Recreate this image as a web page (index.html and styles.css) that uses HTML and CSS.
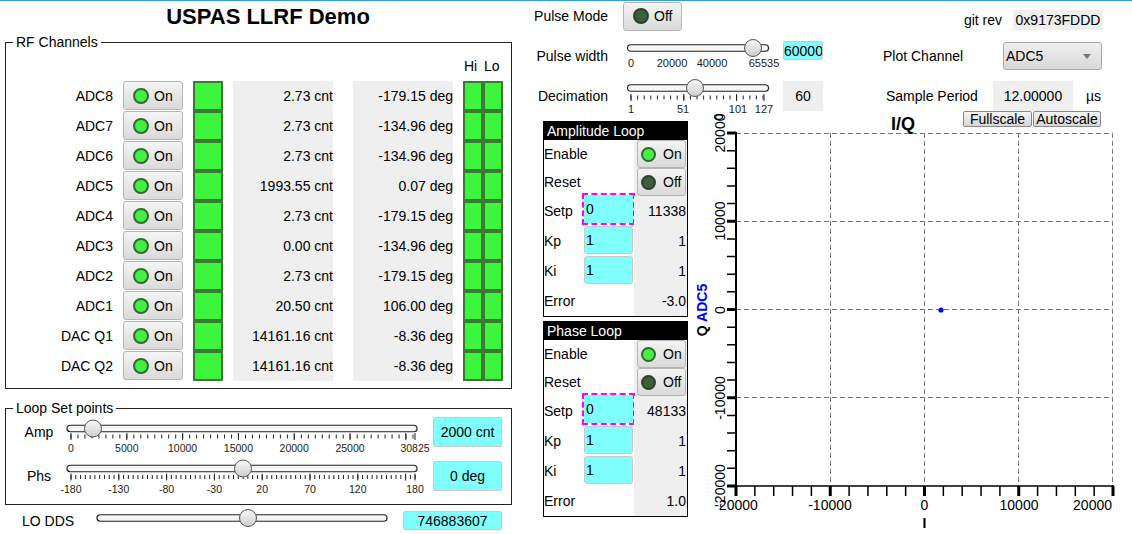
FILE: index.html
```html
<!DOCTYPE html>
<html>
<head>
<meta charset="utf-8">
<title>USPAS LLRF Demo</title>
<link rel="stylesheet" href="styles.css">
</head>
<body>
<div class="page">
  <div class="left">
    <h1 class="title">USPAS LLRF Demo</h1>
    <fieldset class="group rf">
      <legend>RF Channels</legend>
      <div class="rf-head"><span>Hi</span><span>Lo</span></div>
      <div class="rf-row"><span class="ch">ADC8</span><button class="btn rfbtn"><i class="led"></i>On</button><span class="lamp"></span><span class="val v1">2.73 cnt</span><span class="val v2">-179.15 deg</span><span class="hilo"><i></i><i></i></span></div>
      <div class="rf-row"><span class="ch">ADC7</span><button class="btn rfbtn"><i class="led"></i>On</button><span class="lamp"></span><span class="val v1">2.73 cnt</span><span class="val v2">-134.96 deg</span><span class="hilo"><i></i><i></i></span></div>
      <div class="rf-row"><span class="ch">ADC6</span><button class="btn rfbtn"><i class="led"></i>On</button><span class="lamp"></span><span class="val v1">2.73 cnt</span><span class="val v2">-134.96 deg</span><span class="hilo"><i></i><i></i></span></div>
      <div class="rf-row"><span class="ch">ADC5</span><button class="btn rfbtn"><i class="led"></i>On</button><span class="lamp"></span><span class="val v1">1993.55 cnt</span><span class="val v2">0.07 deg</span><span class="hilo"><i></i><i></i></span></div>
      <div class="rf-row"><span class="ch">ADC4</span><button class="btn rfbtn"><i class="led"></i>On</button><span class="lamp"></span><span class="val v1">2.73 cnt</span><span class="val v2">-179.15 deg</span><span class="hilo"><i></i><i></i></span></div>
      <div class="rf-row"><span class="ch">ADC3</span><button class="btn rfbtn"><i class="led"></i>On</button><span class="lamp"></span><span class="val v1">0.00 cnt</span><span class="val v2">-134.96 deg</span><span class="hilo"><i></i><i></i></span></div>
      <div class="rf-row"><span class="ch">ADC2</span><button class="btn rfbtn"><i class="led"></i>On</button><span class="lamp"></span><span class="val v1">2.73 cnt</span><span class="val v2">-179.15 deg</span><span class="hilo"><i></i><i></i></span></div>
      <div class="rf-row"><span class="ch">ADC1</span><button class="btn rfbtn"><i class="led"></i>On</button><span class="lamp"></span><span class="val v1">20.50 cnt</span><span class="val v2">106.00 deg</span><span class="hilo"><i></i><i></i></span></div>
      <div class="rf-row"><span class="ch">DAC Q1</span><button class="btn rfbtn"><i class="led"></i>On</button><span class="lamp"></span><span class="val v1">14161.16 cnt</span><span class="val v2">-8.36 deg</span><span class="hilo"><i></i><i></i></span></div>
      <div class="rf-row"><span class="ch">DAC Q2</span><button class="btn rfbtn"><i class="led"></i>On</button><span class="lamp"></span><span class="val v1">14161.16 cnt</span><span class="val v2">-8.36 deg</span><span class="hilo"><i></i><i></i></span></div>
    </fieldset>

    <fieldset class="group setp">
      <legend>Loop Set points</legend>
      <div class="sp-row">
        <span class="sp-label">Amp</span>
        <svg class="slider sp-amp" width="366" height="30" viewBox="0 0 366 30">
          <defs><linearGradient id="tgA" x1="0" y1="0" x2="0" y2="1"><stop offset="0" stop-color="#fafafa"/><stop offset="1" stop-color="#cdcdcd"/></linearGradient></defs>
          <rect class="trk" x="5" y="5.25" width="350" height="6.5" rx="3.25"/>
          <line class="tick" x1="8.5" y1="16.5" x2="354" y2="16.5" stroke-width="4" stroke-dasharray="1 5.98"/>
          <line class="tick" x1="8.5" y1="16.5" x2="354" y2="16.5" stroke-width="7" stroke-dasharray="1 54.8"/>
          <line class="tick" x1="353" y1="13" x2="353" y2="20" stroke-width="1"/>
          <circle cx="31" cy="8.5" r="8.5" fill="url(#tgA)" class="thumb"/>
          <g class="scale">
            <text x="9" y="32">0</text><text x="64.8" y="32">5000</text><text x="120.6" y="32">10000</text><text x="176.4" y="32">15000</text><text x="232.2" y="32">20000</text><text x="288" y="32">25000</text><text x="353" y="32">30825</text>
          </g>
        </svg>
        <span class="vbox cyan spbox">2000 cnt</span>
      </div>
      <div class="sp-row sp-gap">
        <span class="sp-label">Phs</span>
        <svg class="slider sp-phs" width="366" height="30" viewBox="0 0 366 30">
          <defs><linearGradient id="tgP" x1="0" y1="0" x2="0" y2="1"><stop offset="0" stop-color="#fafafa"/><stop offset="1" stop-color="#cdcdcd"/></linearGradient></defs>
          <rect class="trk" x="5" y="5.25" width="350" height="6.5" rx="3.25"/>
          <line class="tick" x1="8.5" y1="17" x2="354" y2="17" stroke-width="4" stroke-dasharray="1 3.78"/>
          <line class="tick" x1="8.5" y1="17" x2="354" y2="17" stroke-width="7" stroke-dasharray="1 46.8"/>
          <line class="tick" x1="353" y1="13.5" x2="353" y2="20.5" stroke-width="1"/>
          <circle cx="181" cy="8.5" r="8.5" fill="url(#tgP)" class="thumb"/>
          <g class="scale">
            <text x="9" y="33">-180</text><text x="56.8" y="33">-130</text><text x="104.6" y="33">-80</text><text x="152.4" y="33">-30</text><text x="200.2" y="33">20</text><text x="248" y="33">70</text><text x="295.8" y="33">120</text><text x="353" y="33">180</text>
          </g>
        </svg>
        <span class="vbox cyan spbox">0 deg</span>
      </div>
    </fieldset>

    <div class="lo-row">
      <span class="lo-label">LO DDS</span>
      <svg class="slider lo-slider" width="300" height="19" viewBox="0 0 300 19">
        <defs><linearGradient id="tgL" x1="0" y1="0" x2="0" y2="1"><stop offset="0" stop-color="#fafafa"/><stop offset="1" stop-color="#cdcdcd"/></linearGradient></defs>
        <rect class="trk" x="5" y="3.75" width="290" height="6.5" rx="3.25"/>
        <circle cx="156" cy="7" r="8.5" fill="url(#tgL)" class="thumb"/>
      </svg>
      <span class="vbox cyan lobox">746883607</span>
    </div>
  </div>

  <div class="right">
    <div class="crow">
      <span class="clabel">Pulse Mode</span>
      <button class="btn pmbtn"><i class="led off"></i>Off</button>
      <div class="gitrev"><span>git rev</span><span class="gbox gitbox">0x9173FDDD</span></div>
    </div>
    <div class="crow">
      <span class="clabel">Pulse width</span>
      <svg class="slider small" width="150" height="32" viewBox="0 0 150 32">
        <defs><linearGradient id="tgW" x1="0" y1="0" x2="0" y2="1"><stop offset="0" stop-color="#fafafa"/><stop offset="1" stop-color="#cdcdcd"/></linearGradient></defs>
        <rect class="trk" x="4.5" y="4.75" width="141" height="6.5" rx="3.25"/>
        <circle cx="130" cy="8" r="8.5" fill="url(#tgW)" class="thumb"/>
        <g class="scale">
          <text x="8" y="27">0</text><text x="49" y="27">20000</text><text x="89" y="27">40000</text><text x="141" y="27">65535</text>
        </g>
      </svg>
      <span class="vbox cyan pwbox">60000</span>
      <span class="plabel">Plot Channel</span>
      <div class="select"><span>ADC5</span><i class="caret"></i></div>
    </div>
    <div class="crow">
      <span class="clabel">Decimation</span>
      <svg class="slider small" width="150" height="32" viewBox="0 0 150 32">
        <defs><linearGradient id="tgD" x1="0" y1="0" x2="0" y2="1"><stop offset="0" stop-color="#fafafa"/><stop offset="1" stop-color="#cdcdcd"/></linearGradient></defs>
        <rect class="trk" x="4.5" y="4.75" width="141" height="6.5" rx="3.25"/>
        <line class="tick" x1="7.5" y1="17.5" x2="142" y2="17.5" stroke-width="4" stroke-dasharray="1 5.6"/>
        <line class="tick" x1="8" y1="14" x2="8" y2="21" stroke-width="1"/>
        <line class="tick" x1="60.8" y1="14" x2="60.8" y2="21" stroke-width="1"/>
        <line class="tick" x1="113.6" y1="14" x2="113.6" y2="21" stroke-width="1"/>
        <line class="tick" x1="141" y1="14" x2="141" y2="21" stroke-width="1"/>
        <circle cx="72" cy="8" r="8.5" fill="url(#tgD)" class="thumb"/>
        <ellipse cx="95.5" cy="37" rx="4" ry="2.3" fill="none" stroke="#222" stroke-width="1.3"/>
        <g class="scale">
          <text x="8" y="33">1</text><text x="60" y="33">51</text><text x="115" y="33">101</text><text x="141" y="33">127</text>
        </g>
      </svg>
      <span class="vbox gray decbox">60</span>
      <span class="plabel plabel2">Sample Period</span>
      <span class="gbox spbox2">12.00000</span>
      <span class="unit">µs</span>
    </div>

    <div class="lower">
      <div class="loops">
        <div class="loop">
          <div class="loop-head">Amplitude Loop</div>
          <div class="lrow short"><span class="ll">Enable</span><span class="lmid"></span><span class="lv"><button class="btn lbtn"><i class="led"></i>On</button></span></div>
          <div class="lrow short"><span class="ll">Reset</span><span class="lmid"></span><span class="lv"><button class="btn lbtn"><i class="led off"></i>Off</button></span></div>
          <div class="lrow"><span class="ll">Setp</span><span class="lmid"><span class="inp focus">0</span></span><span class="lv">11338</span></div>
          <div class="lrow"><span class="ll">Kp</span><span class="lmid"><span class="inp">1</span></span><span class="lv">1</span></div>
          <div class="lrow"><span class="ll">Ki</span><span class="lmid"><span class="inp">1</span></span><span class="lv">1</span></div>
          <div class="lrow"><span class="ll">Error</span><span class="lmid"></span><span class="lv">-3.0</span></div>
        </div>
        <div class="loop">
          <div class="loop-head">Phase Loop</div>
          <div class="lrow short"><span class="ll">Enable</span><span class="lmid"></span><span class="lv"><button class="btn lbtn"><i class="led"></i>On</button></span></div>
          <div class="lrow short"><span class="ll">Reset</span><span class="lmid"></span><span class="lv"><button class="btn lbtn"><i class="led off"></i>Off</button></span></div>
          <div class="lrow"><span class="ll">Setp</span><span class="lmid"><span class="inp focus">0</span></span><span class="lv">48133</span></div>
          <div class="lrow"><span class="ll">Kp</span><span class="lmid"><span class="inp">1</span></span><span class="lv">1</span></div>
          <div class="lrow"><span class="ll">Ki</span><span class="lmid"><span class="inp">1</span></span><span class="lv">1</span></div>
          <div class="lrow"><span class="ll">Error</span><span class="lmid"></span><span class="lv">1.0</span></div>
        </div>
      </div>

      <div class="plot-wrap">
        <div class="plot-head">
          <span class="plot-title">I/Q</span>
          <button class="pbtn fs">Fullscale</button>
          <button class="pbtn as">Autoscale</button>
        </div>
        <svg class="plot" width="442" height="407" viewBox="690 127 442 407">
          <g class="grid">
            <line x1="830.5" y1="133" x2="830.5" y2="486"/>
            <line x1="924.5" y1="133" x2="924.5" y2="486"/>
            <line x1="1018.5" y1="133" x2="1018.5" y2="486"/>
            <line x1="1112.5" y1="133" x2="1112.5" y2="486"/>
            <line x1="736" y1="133.5" x2="1113" y2="133.5"/>
            <line x1="736" y1="221.5" x2="1113" y2="221.5"/>
            <line x1="736" y1="309.5" x2="1113" y2="309.5"/>
            <line x1="736" y1="397.5" x2="1113" y2="397.5"/>
          </g>
          <g class="axis">
            <line x1="736" y1="132" x2="736" y2="487" stroke-width="2"/>
            <line x1="735" y1="486" x2="1114" y2="486" stroke-width="1.5"/>
            <line x1="731.5" y1="132.25" x2="731.5" y2="488" stroke-width="9" stroke-dasharray="1.5 16.15"/>
            <line x1="731.5" y1="131.5" x2="731.5" y2="489" stroke-width="9" stroke-dasharray="3 85.25"/>
            <line x1="735.25" y1="491" x2="1115" y2="491" stroke-width="10" stroke-dasharray="1.5 17.35"/>
            <line x1="734.5" y1="491" x2="1115" y2="491" stroke-width="10" stroke-dasharray="3 91.25"/>
          </g>
          <g class="ylab">
            <text transform="translate(725 133) rotate(-90)">20000</text>
            <text transform="translate(725 221) rotate(-90)">10000</text>
            <text transform="translate(725 310) rotate(-90)">0</text>
            <text transform="translate(725 398) rotate(-90)">-10000</text>
            <text transform="translate(725 486) rotate(-90)">-20000</text>
          </g>
          <g class="xlab">
            <text x="736" y="510">-20000</text>
            <text x="830" y="510">-10000</text>
            <text x="924.5" y="510">0</text>
            <text x="1019" y="510">10000</text>
            <text x="1112" y="510" class="end">20000</text>
          </g>
          <text class="axname" x="924.5" y="528">I</text>
          <text class="axname" transform="translate(707 310) rotate(-90)">Q <tspan class="series">ADC5</tspan></text>
          <circle cx="941" cy="310" r="2.6" fill="#0000ff"/>
        </svg>
      </div>
    </div>
  </div>
</div>
</body>
</html>
```

FILE: styles.css
```css
* { box-sizing: border-box; }
html, body { margin: 0; padding: 0; }
body {
  width: 1132px;
  height: 534px;
  overflow: hidden;
  font-family: "Liberation Sans", Arial, sans-serif;
  font-size: 14px;
  color: #000;
  background: linear-gradient(#2fa3dc, #2fa3dc) top left / 100% 1px no-repeat, #fff;
}
.page { display: flex; }
.left { width: 512px; flex: none; }

.title {
  margin: 0;
  height: 34px;
  line-height: 34px;
  font-size: 22px;
  font-weight: bold;
  text-align: center;
  padding-left: 24px;
}

fieldset.group {
  margin: 0 0 0 5px;
  width: 507px;
  min-width: 0;
  border: 1px solid #222;
  padding: 0;
}
fieldset.group legend {
  margin-left: 7px;
  padding: 0 3px;
  line-height: 16px;
  font-size: 14px;
}

/* RF channels */
fieldset.rf { padding: 6px 7px 7px 0; }
.rf-head {
  display: flex;
  justify-content: flex-end;
  height: 20px;
  line-height: 20px;
  margin-bottom: 5px;
}
.rf-head span { width: 20px; }
.rf-row { display: flex; align-items: center; height: 30px; }
.ch { width: 107px; text-align: right; margin-right: 10px; white-space: nowrap; }

.btn {
  display: flex;
  align-items: center;
  font: inherit;
  color: #000;
  border: 1px solid #b5b5b5;
  border-radius: 3px;
  background: linear-gradient(#f4f4f4, #dadada);
  margin: 0;
  cursor: pointer;
}
.rfbtn {
  width: 60px;
  height: 29px;
  align-self: flex-start;
  padding: 0 0 0 9px;
  gap: 5px;
  margin-right: 10px;
}
.led {
  display: block;
  width: 16px;
  height: 16px;
  border-radius: 50%;
  border: 2px solid #2e6b2e;
  background: #44f044;
  flex: none;
}
.led.off { background: #3d5e3d; border-color: #2a432a; }

.lamp {
  width: 30px;
  height: 30px;
  border: 2px solid #3b7a35;
  background: #3df53d;
  margin-right: 10px;
}
.val {
  width: 100px;
  height: 30px;
  line-height: 30px;
  background: #efefef;
  text-align: right;
  white-space: nowrap;
}
.v1 { margin-right: 20px; }
.v2 { margin-right: 10px; }
.hilo { display: flex; width: 40px; height: 30px; }
.hilo i { flex: 1; border: 2px solid #3b7a35; background: #3df53d; }

/* Loop set points */
fieldset.setp { margin-top: 11px; padding: 1px 9px 13px 0; }
.sp-row { display: flex; align-items: center; height: 30px; padding-left: 13px; }
.sp-gap { margin-top: 14px; }
.sp-label { width: 40px; text-align: center; }
.slider { overflow: visible; display: block; flex: none; }
.sp-amp { margin-left: 3px; align-self: flex-start; margin-top: 3px; }
.sp-phs { margin-left: 3px; align-self: flex-start; margin-top: -1px; }
.trk { fill: #f6f6f6; stroke: #222; stroke-width: 1.2; }
.thumb { stroke: #555; stroke-width: 1; }
.tick { stroke: #222; }
.scale text {
  font-family: "Liberation Sans", Arial, sans-serif;
  font-size: 10.5px;
  fill: #222;
  text-anchor: middle;
}
.small .scale text { font-size: 11px; }

.vbox {
  display: flex;
  align-items: center;
  justify-content: center;
  white-space: nowrap;
}
.cyan { background: #80ffff; border: 1px solid #c8c8c8; border-radius: 2px; }
.gray { background: #efefef; }
.spbox { margin-left: 5px; width: 69px; height: 30px; }

.lo-row { display: flex; align-items: center; height: 19px; margin-top: 6px; }
.lo-label { padding-left: 22px; width: 92px; white-space: nowrap; }
.lobox { margin-left: 11px; width: 99px; height: 19px; }

/* right side */
.right { margin-left: 21px; width: 599px; flex: none; }
.crow { display: flex; align-items: center; height: 32px; }
.crow + .crow { margin-top: 8px; }
.clabel { width: 75px; flex: none; text-align: right; white-space: nowrap; }
.pmbtn {
  margin-left: 15px;
  width: 59px;
  height: 29px;
  padding: 0 0 0 9px;
  gap: 5px;
}
.gitrev {
  margin-left: auto;
  margin-right: 29px;
  align-self: flex-end;
  margin-bottom: 2px;
  height: 20px;
  display: flex;
  align-items: center;
}
.gbox {
  display: flex;
  align-items: center;
  justify-content: center;
  background: #efefef;
  white-space: nowrap;
}
.gitbox { margin-left: 11px; width: 90px; height: 20px; }
.small { margin-left: 15px; }
.pwbox {
  margin-left: 10px;
  width: 40px;
  height: 19px;
  align-self: flex-start;
  margin-top: 1px;
  justify-content: flex-start;
  padding-left: 0;
  overflow: hidden;
}
.decbox { margin-left: 10px; width: 40px; height: 30px; }
.plabel { margin-left: 60px; width: 120px; white-space: nowrap; }
.plabel2 { margin-left: 63px; width: 107px; }
.select {
  width: 99px;
  height: 28px;
  display: flex;
  align-items: center;
  justify-content: space-between;
  padding-left: 2px;
  border: 1px solid #a8a8a8;
  border-radius: 3px;
  background: linear-gradient(#f0f0f0, #d8d8d8);
}
.caret {
  width: 0;
  height: 0;
  border-left: 4px solid transparent;
  border-right: 4px solid transparent;
  border-top: 5px solid #777;
  margin-right: 10px;
}
.spbox2 { width: 80px; height: 30px; }
.unit { margin-left: 13px; }

.lower { display: flex; margin-top: -2px; }
.loops {
  margin-left: 10px;
  margin-top: 11px;
  width: 145px;
  flex: none;
  display: flex;
  flex-direction: column;
  gap: 4px;
}
.loop { border: 1px solid #000; }
.loop-head {
  background: #000;
  color: #fff;
  height: 18px;
  line-height: 18px;
  padding-left: 3px;
  white-space: nowrap;
}
.lrow { display: flex; height: 30px; }
.lrow.short { height: 28px; }
.ll { width: 39px; flex: none; display: flex; align-items: center; white-space: nowrap; }
.lmid { width: 51px; flex: none; }
.lv {
  width: 53px;
  flex: none;
  background: #efefef;
  display: flex;
  align-items: center;
  justify-content: flex-end;
  padding-right: 1px;
}
.lbtn {
  width: 49px;
  height: 28px;
  padding: 0 0 0 3px;
  gap: 7px;
}
.lbtn .led { width: 15px; height: 15px; }
.inp {
  display: flex;
  align-items: center;
  width: 49px;
  height: 28px;
  margin-left: 1px;
  padding-left: 1px;
  background: #80ffff;
  border: 1px solid #c8c8c8;
  border-radius: 3px;
}
.inp.focus {
  margin-top: -1px;
  border-color: #80ffff;
  border-radius: 0;
  outline: 2px dashed #ff00ff;
}

.plot-wrap { margin-left: 2px; width: 442px; flex: none; }
.plot-head {
  display: flex;
  align-items: flex-start;
  height: 17px;
  padding-left: 201px;
  padding-right: 31px;
}
.plot-title {
  font-size: 18px;
  font-weight: bold;
  line-height: 18px;
  margin-top: 5px;
}
.pbtn {
  margin: 1px 0 0 0;
  height: 16px;
  padding: 0;
  font: inherit;
  font-size: 14px;
  line-height: 14px;
  color: #000;
  text-align: center;
  border: 1px solid #8a8a8a;
  border-radius: 2px;
  background: linear-gradient(#f6f6f6, #d6d6d6);
}
.fs { margin-left: auto; width: 69px; }
.as { margin-left: 1px; width: 68px; }

.plot { display: block; overflow: visible; }
.grid line { stroke: #777; stroke-width: 1; stroke-dasharray: 5 3; fill: none; }
.axis line { stroke: #000; }
.ylab text, .xlab text {
  font-family: "Liberation Sans", Arial, sans-serif;
  font-size: 14px;
  fill: #000;
  text-anchor: middle;
}
.xlab text.end { text-anchor: end; }
.axname {
  font-family: "Liberation Sans", Arial, sans-serif;
  font-size: 14px;
  font-weight: bold;
  text-anchor: middle;
  fill: #000;
}
.series { fill: #0000ff; }
```
